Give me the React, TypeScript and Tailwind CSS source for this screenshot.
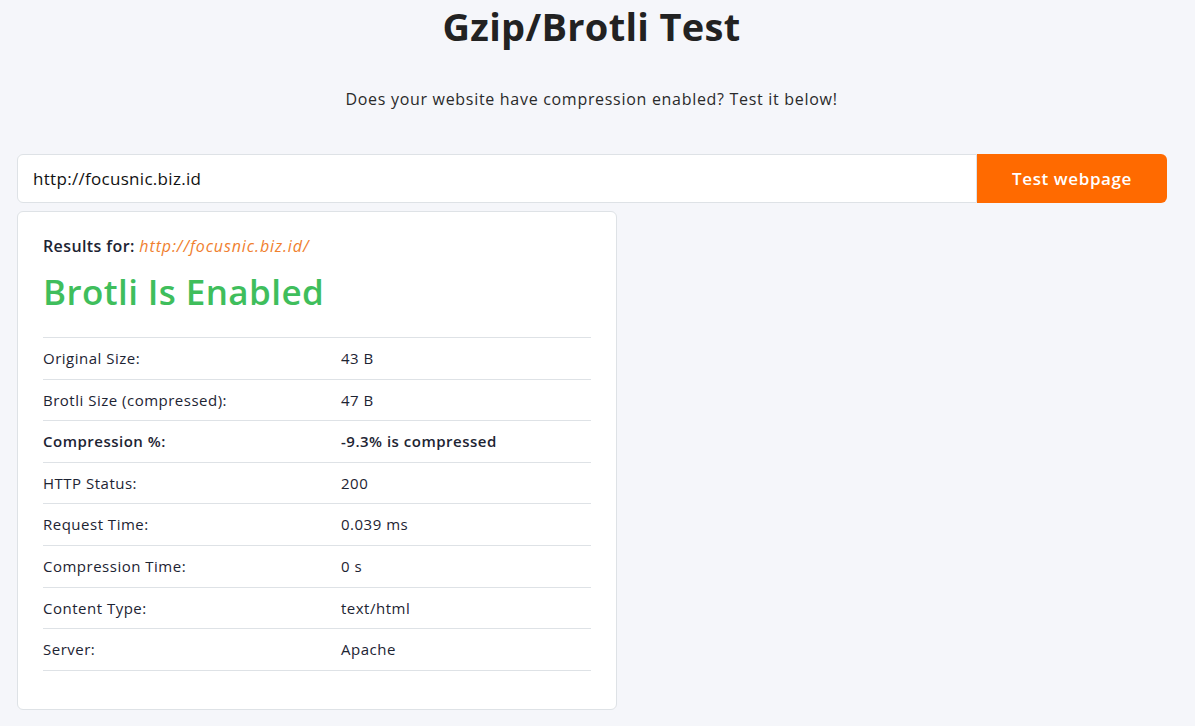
import React from "react";

const rows: { label: string; value: string; bold?: boolean }[] = [
  { label: "Original Size:", value: "43 B" },
  { label: "Brotli Size (compressed):", value: "47 B" },
  { label: "Compression %:", value: "-9.3% is compressed", bold: true },
  { label: "HTTP Status:", value: "200" },
  { label: "Request Time:", value: "0.039 ms" },
  { label: "Compression Time:", value: "0 s" },
  { label: "Content Type:", value: "text/html" },
  { label: "Server:", value: "Apache" },
];

export default function App() {
  return (
    <div
      className="min-h-screen bg-[#f5f6fa] text-[#212529]"
      style={{ fontFamily: '"Open Sans", "Noto Sans", sans-serif' }}
    >
      {/* header */}
      <div className="flex flex-col items-center pr-[12px]">
        <h1 className="mt-[4px] text-[38px] font-bold leading-[44px] text-[#222] tracking-[0.3px]">
          Gzip/Brotli Test
        </h1>
        <p className="mt-[39px] text-[16px] leading-[24px] tracking-[0.7px] text-[#2a2a2a]">
          Does your website have compression enabled? Test it below!
        </p>
      </div>

      <div className="ml-[17px] w-[1150px] mt-[43px]">
        {/* url form */}
        <div className="flex h-[49px]">
          <div className="flex flex-1 items-center rounded-l-[6px] border border-[#dee2e6] bg-white pl-[15px] text-[17px] tracking-[0.3px] text-[#111]">
            http://focusnic.biz.id
          </div>
          <button className="w-[190px] rounded-r-[6px] bg-[#ff6a00] text-[17px] font-semibold tracking-[0.6px] text-white">
            Test webpage
          </button>
        </div>

        {/* results card */}
        <div className="mt-[8px] w-[600px] rounded-[6px] border border-[#dee2e6] bg-white px-[25px] pt-[22px] pb-[38px]">
          <div className="text-[16px] font-semibold tracking-[0.4px] text-[#1d2433]">
            Results for:{" "}
            <span className="italic font-medium tracking-[0.9px] text-[#f0802e]">http://focusnic.biz.id/</span>
          </div>
          <h2 className="mt-[12px] text-[35px] font-semibold leading-[44px] tracking-[0.4px] text-[#3fbe5c]">
            Brotli Is Enabled
          </h2>
          <div className="mt-[23px] border-t border-[#dee2e6]">
            {rows.map((r) => (
              <div
                key={r.label}
                className={`flex h-[41.6px] items-center border-b border-[#dee2e6] text-[15px] tracking-[0.5px] text-[#1d2433] ${
                  r.bold ? "font-semibold" : ""
                }`}
              >
                <div className="w-[298px]">{r.label}</div>
                <div>{r.value}</div>
              </div>
            ))}
          </div>
        </div>
      </div>
    </div>
  );
}
